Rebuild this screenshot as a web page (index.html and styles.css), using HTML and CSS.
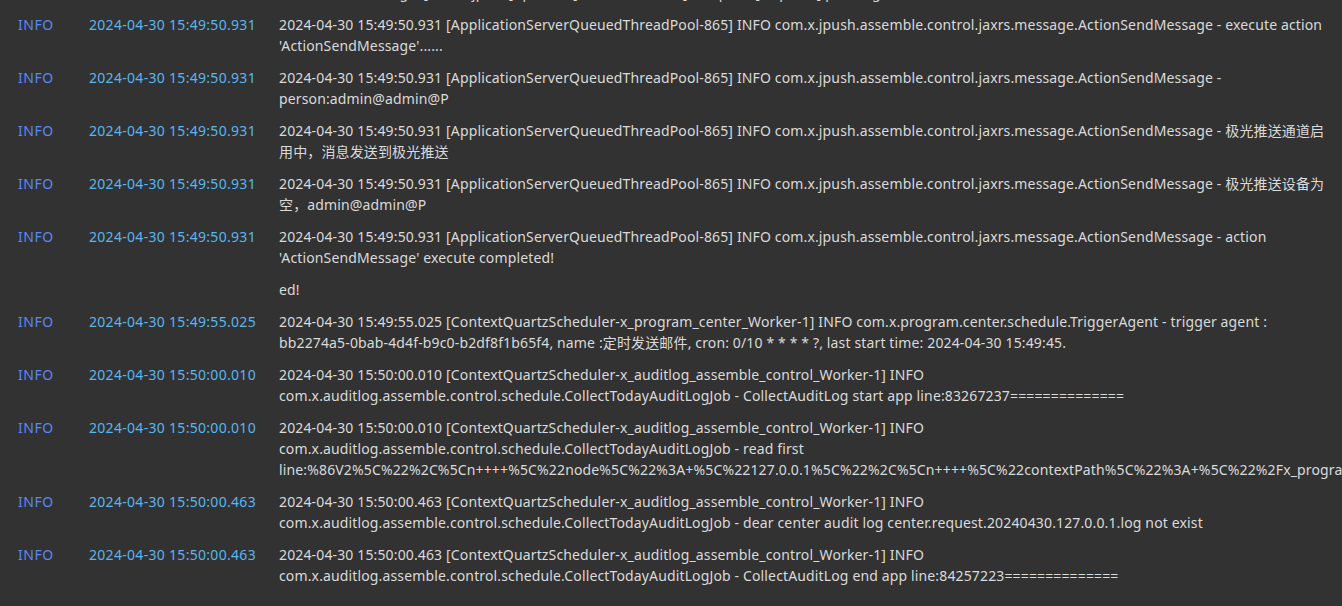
FILE: index.html
```html
<!DOCTYPE html>
<html lang="zh-CN">
<head>
<meta charset="utf-8">
<title>Log</title>
<link rel="stylesheet" href="styles.css">
</head>
<body>
<div class="viewport">
  <div class="log">
    <div class="row">
      <span class="level">INFO</span>
      <span class="time">2024-04-30 15:49:50.931</span>
      <span class="msg">'ActionSendMessage' [com.x.jpush] queued [ThreadPool-865] - request [dispatch] pending</span>
    </div>
    <div class="row">
      <span class="level">INFO</span>
      <span class="time">2024-04-30 15:49:50.931</span>
      <span class="msg">2024-04-30 15:49:50.931 [ApplicationServerQueuedThreadPool-865] INFO com.x.jpush.assemble.control.jaxrs.message.ActionSendMessage - execute action 'ActionSendMessage'......</span>
    </div>
    <div class="row">
      <span class="level">INFO</span>
      <span class="time">2024-04-30 15:49:50.931</span>
      <span class="msg">2024-04-30 15:49:50.931 [ApplicationServerQueuedThreadPool-865] INFO com.x.jpush.assemble.control.jaxrs.message.ActionSendMessage - person:admin@admin@P</span>
    </div>
    <div class="row">
      <span class="level">INFO</span>
      <span class="time">2024-04-30 15:49:50.931</span>
      <span class="msg">2024-04-30 15:49:50.931 [ApplicationServerQueuedThreadPool-865] INFO com.x.jpush.assemble.control.jaxrs.message.ActionSendMessage - 极光推送通道启用中，消息发送到极光推送</span>
    </div>
    <div class="row">
      <span class="level">INFO</span>
      <span class="time">2024-04-30 15:49:50.931</span>
      <span class="msg">2024-04-30 15:49:50.931 [ApplicationServerQueuedThreadPool-865] INFO com.x.jpush.assemble.control.jaxrs.message.ActionSendMessage - 极光推送设备为空，admin@admin@P</span>
    </div>
    <div class="row">
      <span class="level">INFO</span>
      <span class="time">2024-04-30 15:49:50.931</span>
      <span class="msg">2024-04-30 15:49:50.931 [ApplicationServerQueuedThreadPool-865] INFO com.x.jpush.assemble.control.jaxrs.message.ActionSendMessage - action 'ActionSendMessage' execute completed!</span>
    </div>
    <div class="row">
      <span class="level"></span>
      <span class="time"></span>
      <span class="msg">ed!</span>
    </div>
    <div class="row">
      <span class="level">INFO</span>
      <span class="time">2024-04-30 15:49:55.025</span>
      <span class="msg">2024-04-30 15:49:55.025 [ContextQuartzScheduler-x_program_center_Worker-1] INFO com.x.program.center.schedule.TriggerAgent - trigger agent : <span class="nobreak">bb2274a5-0bab-4d4f-b9c0-b2df8f1b65f4</span>, name :定时发送邮件, cron: 0/10 * * * * ?, last start time: 2024-04-30 15:49:45.</span>
    </div>
    <div class="row">
      <span class="level">INFO</span>
      <span class="time">2024-04-30 15:50:00.010</span>
      <span class="msg">2024-04-30 15:50:00.010 [ContextQuartzScheduler-x_auditlog_assemble_control_Worker-1] INFO com.x.auditlog.assemble.control.schedule.CollectTodayAuditLogJob - CollectAuditLog start app line:83267237==============</span>
    </div>
    <div class="row">
      <span class="level">INFO</span>
      <span class="time">2024-04-30 15:50:00.010</span>
      <span class="msg">2024-04-30 15:50:00.010 [ContextQuartzScheduler-x_auditlog_assemble_control_Worker-1] INFO com.x.auditlog.assemble.control.schedule.CollectTodayAuditLogJob - read first line:%86V2%5C%22%2C%5Cn++++%5C%22node%5C%22%3A+%5C%22127.0.0.1%5C%22%2C%5Cn++++%5C%22contextPath%5C%22%3A+%5C%22%2Fx_program_center%5C%22%2C%5Cn++++%5C%22method%5C%22%3A+%5C%22GET%5C%22</span>
    </div>
    <div class="row">
      <span class="level">INFO</span>
      <span class="time">2024-04-30 15:50:00.463</span>
      <span class="msg">2024-04-30 15:50:00.463 [ContextQuartzScheduler-x_auditlog_assemble_control_Worker-1] INFO com.x.auditlog.assemble.control.schedule.CollectTodayAuditLogJob - dear center audit log center.request.20240430.127.0.0.1.log not exist</span>
    </div>
    <div class="row">
      <span class="level">INFO</span>
      <span class="time">2024-04-30 15:50:00.463</span>
      <span class="msg">2024-04-30 15:50:00.463 [ContextQuartzScheduler-x_auditlog_assemble_control_Worker-1] INFO com.x.auditlog.assemble.control.schedule.CollectTodayAuditLogJob - CollectAuditLog end app line:84257223==============</span>
    </div>
  </div>
</div>
</body>
</html>
```

FILE: styles.css
```css
html, body {
  margin: 0;
  padding: 0;
  background: #323232;
}

body {
  font-family: "Noto Sans", "Noto Sans CJK SC", sans-serif;
  font-size: 14px;
  line-height: 21px;
  color: #dcdcdc;
}

.viewport {
  width: 1342px;
  height: 606px;
  overflow: hidden;
}

.log {
  display: flex;
  flex-direction: column;
  margin-top: -23px;
}

.row {
  display: grid;
  grid-template-columns: 71px 190px minmax(0, 1fr);
  padding: 5px 12px 6px 18px;
}

.level {
  color: #5a88f7;
  letter-spacing: 0.5px;
}

.time {
  color: #58b6f0;
  letter-spacing: 0.3px;
}

.msg {
  color: #dadada;
  letter-spacing: 0.14px;
  overflow-wrap: normal;
  white-space: normal;
}

.nobreak {
  white-space: nowrap;
}
```
